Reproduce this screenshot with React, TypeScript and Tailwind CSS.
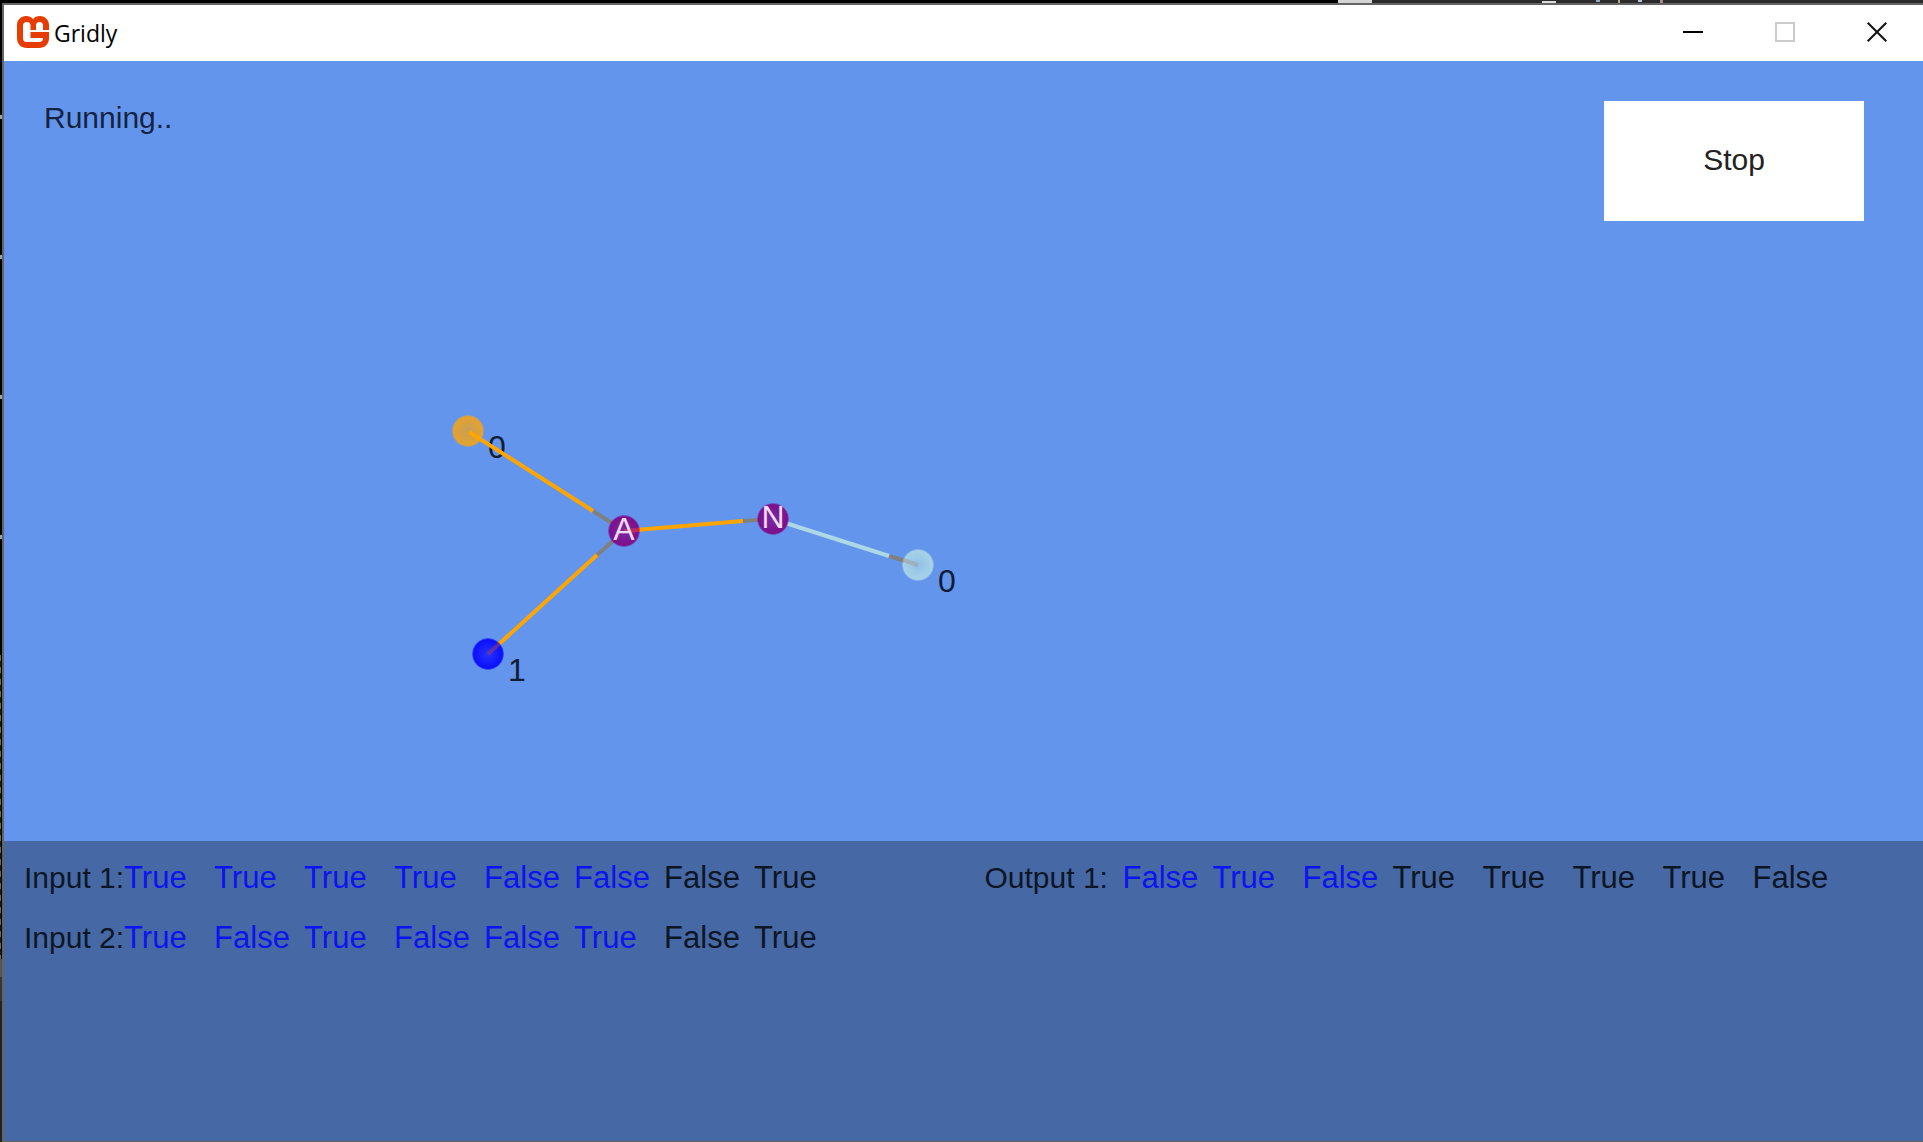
import React from "react";

type Row = { label: string; values: boolean[]; done: number };

const INPUTS: Row[] = [
  { label: "Input 1:", values: [true, true, true, true, false, false, false, true], done: 6 },
  { label: "Input 2:", values: [true, false, true, false, false, true, false, true], done: 6 },
];

const OUTPUTS: Row[] = [
  { label: "Output 1:", values: [false, true, false, true, true, true, true, false], done: 3 },
];

function SignalTable({ rows, labelClass, name }: { rows: Row[]; labelClass: string; name: string }) {
  return (
    <table aria-label={name} className="table-fixed border-collapse">
      <colgroup>
        <col className={labelClass} />
        {rows[0].values.map((_, i) => (
          <col key={i} className="w-[90px]" />
        ))}
      </colgroup>
      <tbody>
        {rows.map((row) => (
          <tr key={row.label} className="h-[60px]">
            <th
              scope="row"
              className="p-0 text-left align-middle text-[30px] leading-9 font-normal whitespace-nowrap text-[#0d1624]"
            >
              {row.label}
            </th>
            {row.values.map((v, i) => (
              <td
                key={i}
                className={
                  i < row.done
                    ? "p-0 align-middle text-[31px] leading-9 text-[#0c14f0]"
                    : "p-0 align-middle text-[31px] leading-9 text-[#0d1624]"
                }
              >
                {v ? "True" : "False"}
              </td>
            ))}
          </tr>
        ))}
      </tbody>
    </table>
  );
}

function Logo() {
  return (
    <svg viewBox="0 0 32 32" className="size-8" aria-hidden="true">
      <path
        fill="#e73c00"
        d="M9 0C12 0 14.5 1.2 16 3.2C17.5 1.2 20 0 23 0C28 0 32 4 32 9V14H26V9.5C26 7.5 24.8 6 22.6 6C20.3 6 19 7.5 19 9.5V14H13.5V9.5C13.5 7.5 12.2 6 9.8 6C7.4 6 6 7.5 6 9.5V22.5C6 25 7.5 26 9.5 26H22.5C24.5 26 26 25 26 22H13.5V16H32V22C32 28 28 32 22 32H10C4 32 0 28 0 22V9C0 4 4 0 9 0Z"
      />
    </svg>
  );
}

function TitleBar() {
  return (
    <header className="flex h-14 items-center justify-between bg-white pb-0.5 pl-[13px]">
      <div className="flex items-center gap-[5px]">
        <Logo />
        <h1 className="pt-0.5 font-['Open_Sans',sans-serif] text-[23px] leading-8 text-black">Gridly</h1>
      </div>
      <div className="flex h-full">
        <button aria-label="Minimize" className="flex w-[92px] items-center justify-center">
          <svg viewBox="0 0 20 20" className="size-5" aria-hidden="true">
            <path d="M0 10H20" stroke="#000" strokeWidth="2" />
          </svg>
        </button>
        <button aria-label="Maximize" disabled className="flex w-[92px] items-center justify-center">
          <svg viewBox="0 0 20 20" className="size-5" fill="none" aria-hidden="true">
            <rect x="1" y="1" width="18" height="18" stroke="#cbcbcb" strokeWidth="2" />
          </svg>
        </button>
        <button aria-label="Close" className="flex w-[92px] items-center justify-center">
          <svg viewBox="0 0 20 20" className="size-5" aria-hidden="true">
            <path d="M0.7 0.7L19.3 19.3M19.3 0.7L0.7 19.3" stroke="#111" strokeWidth="2" />
          </svg>
        </button>
      </div>
    </header>
  );
}

function Circuit() {
  return (
    <svg className="absolute inset-0 size-full" role="img" aria-label="Circuit">
      <defs>
        <radialGradient id="amber">
          <stop offset="0" stopColor="#c4a05c" />
          <stop offset="0.9" stopColor="#e6a22c" />
          <stop offset="1" stopColor="#e6a22c" stopOpacity="0.3" />
        </radialGradient>
        <radialGradient id="blue">
          <stop offset="0" stopColor="#2733f8" />
          <stop offset="0.9" stopColor="#0b0ffd" />
          <stop offset="1" stopColor="#0b0ffd" stopOpacity="0.3" />
        </radialGradient>
        <radialGradient id="purple">
          <stop offset="0" stopColor="#782ba4" />
          <stop offset="0.9" stopColor="#7d0e8c" />
          <stop offset="1" stopColor="#7d0e8c" stopOpacity="0.3" />
        </radialGradient>
        <radialGradient id="ice">
          <stop offset="0" stopColor="#92c0e9" />
          <stop offset="0.9" stopColor="#a5d2e6" />
          <stop offset="1" stopColor="#a5d2e6" stopOpacity="0.3" />
        </radialGradient>
      </defs>

      <circle cx="464" cy="370" r="16" fill="url(#amber)" />
      <g className="text-[32px]" textAnchor="middle" fill="#0f1c33">
        <text x="493" y="397">0</text>
        <text x="513" y="620">1</text>
        <text x="943" y="531">0</text>
      </g>
      <g strokeWidth="4">
        <path d="M589 450L620 470M592 495L620 470M739 460L769 458M885 495L914 504" stroke="#808080" />
        <path d="M465 371L589 450M484 593L593 494M620 470L739 460" stroke="#ffa500" />
        <path d="M769 458L885 495" stroke="#add8e6" />
      </g>
      <circle cx="484" cy="593" r="16" fill="url(#blue)" />
      <circle cx="620" cy="470" r="16" fill="url(#purple)" />
      <circle cx="769" cy="458" r="16" fill="url(#purple)" />
      <circle cx="914" cy="504" r="16" fill="url(#ice)" />
      <g strokeWidth="4">
        <path d="M484 593L495 583" stroke="#a04060" opacity="0.5" />
        <path d="M620 470L636 469" stroke="#ff4030" opacity="0.5" />
        <path d="M899 499L914 504" stroke="#a09a90" opacity="0.5" />
      </g>
      <g className="text-[32px]" textAnchor="middle" fill="#f0dcf2">
        <text x="620" y="479">A</text>
        <text x="769" y="467">N</text>
      </g>
    </svg>
  );
}

/* Slivers of the desktop that stay visible round the window. */
function DesktopTop() {
  return (
    <div className="flex h-[3px] justify-end" aria-hidden="true">
      <div className="w-[34px] bg-[#d4d4d4]" />
      <div className="flex w-[551px] items-end bg-[#2b2b2c] pl-[170px]">
        <div className="h-0.5 w-[14px] bg-[#dcdcdc]" />
        <div className="ml-[40px] flex gap-[18px]">
          <div className="h-0.5 w-1 bg-[#9aa8b8]" />
          <div className="h-[3px] w-0.5 bg-[#b0a890]" />
          <div className="h-0.5 w-1 bg-[#b8c4cc]" />
          <div className="h-[3px] w-[3px] bg-[#a09080]" />
        </div>
      </div>
    </div>
  );
}

function DesktopLeft() {
  return (
    <div className="flex w-[2px] shrink-0 flex-col" aria-hidden="true">
      <div className="flex h-[652px] flex-col gap-[136px] pt-[112px]">
        <div className="h-1 bg-[#9aa4b0]" />
        <div className="h-1 bg-[#9aa4b0]" />
        <div className="h-1 bg-[#9aa4b0]" />
        <div className="h-1 bg-[#9aa4b0]" />
      </div>
      <div className="h-[304px] w-px bg-[repeating-linear-gradient(#6a6a6a_0px,#6a6a6a_6px,#1c1c1c_6px,#1c1c1c_12px)]" />
      <div className="h-[18px] bg-[#555]" />
      <div className="h-[24px] bg-[#363638]" />
      <div className="flex-1 bg-[#222]" />
    </div>
  );
}

export default function App() {
  return (
    <div className="flex min-h-screen flex-col bg-black font-['Liberation_Sans',Arial,sans-serif]">
      <DesktopTop />
      <div className="flex flex-1">
        <DesktopLeft />
        <div className="flex flex-1 flex-col border-t-2 border-b border-l-2 border-[#646464]">
          <TitleBar />
          <main className="flex flex-1 flex-col">
            <section className="relative flex flex-1 items-start justify-between bg-[#6495ed] pr-[59px] pl-10">
              <Circuit />
              <p className="pt-[39px] text-[30px] leading-9 text-[#14233f]">Running..</p>
              <button className="relative mt-10 h-[120px] w-[260px] bg-white pb-0.5 text-[30px] leading-9 text-[#222]">
                Stop
              </button>
            </section>
            <section className="grid min-h-[300px] grid-cols-2 bg-[#4668a5] pt-[7px]">
              <div className="pl-5">
                <SignalTable name="Inputs" rows={INPUTS} labelClass="w-[97px]" />
              </div>
              <div className="pl-[21px]">
                <SignalTable name="Outputs" rows={OUTPUTS} labelClass="w-[138px]" />
              </div>
            </section>
          </main>
        </div>
      </div>
    </div>
  );
}
